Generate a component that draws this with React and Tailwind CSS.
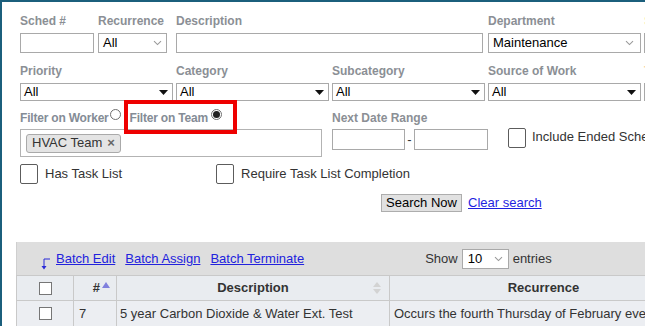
import React from "react";

const Label = ({ children, className = "" }) => (
  <div className={"h-4 text-[12px] leading-4 font-bold text-[#8b8f95] whitespace-nowrap " + className}>{children}</div>
);

const Chevron = () => (
  <svg width="9" height="6" viewBox="0 0 9 6" className="shrink-0">
    <path d="M1 1.2 L4.5 4.6 L8 1.2" fill="none" stroke="#9a9a9a" strokeWidth="1.1" />
  </svg>
);

const Tri = () => (
  <svg width="9" height="5" viewBox="0 0 9 5" className="shrink-0">
    <path d="M0 0 L9 0 L4.5 5 Z" fill="#111" />
  </svg>
);

const SelectTri = ({ value = "All" }) => (
  <div className="h-[18px] border border-[#a9a9a9] bg-white flex items-center pl-[3px] pr-[4px]">
    <span className="flex-1 text-[13px] leading-4 text-black">{value}</span>
    <Tri />
  </div>
);

const Check = ({ cls = "w-[18px] h-[20px]" }) => (
  <div className={cls + " border border-[#5c5c5c] rounded-[2px] bg-white shrink-0"} />
);

const Radio = ({ on }) => (
  <div className="w-[11px] h-[11px] rounded-full border border-[#6f6f6f] bg-white flex items-center justify-center shrink-0 relative top-[-4px]">
    {on && <div className="w-[7px] h-[7px] rounded-full bg-[#222]" />}
  </div>
);

export default function App() {
  return (
    <div className="w-[645px] h-[326px] overflow-hidden bg-white border-l-2 border-t-2 border-[#1b5f7c] font-['Liberation_Sans',Arial,sans-serif] text-[13px] text-[#222]">
      <div className="pl-[18px] pt-[11px] w-[800px]">
        {/* Row 1 */}
        <div className="flex">
          <div className="w-[74px] shrink-0 flex flex-col gap-[4px]">
            <Label>Sched #</Label>
            <div className="h-[20px] border border-[#a9a9a9] bg-white" />
          </div>
          <div className="ml-[4px] w-[69px] shrink-0 flex flex-col gap-[4px]">
            <Label>Recurrence</Label>
            <div className="h-[20px] border border-[#a9a9a9] bg-white flex items-center pl-[4px] pr-[4px]">
              <span className="flex-1 text-[13px] leading-4 text-black">All</span>
              <Chevron />
            </div>
          </div>
          <div className="ml-[9px] w-[307px] shrink-0 flex flex-col gap-[4px]">
            <Label>Description</Label>
            <div className="h-[20px] border border-[#a9a9a9] bg-white" />
          </div>
          <div className="ml-[5px] w-[153px] shrink-0 flex flex-col gap-[4px]">
            <Label>Department</Label>
            <div className="h-[20px] border border-[#a9a9a9] bg-white flex items-center pl-[4px] pr-[6px]">
              <span className="flex-1 text-[13px] leading-4 text-black">Maintenance</span>
              <Chevron />
            </div>
          </div>
          <div className="ml-[3px] w-[100px] shrink-0 flex flex-col gap-[4px]">
            <Label className="text-[#f3e6a8]">Status</Label>
            <div className="h-[20px] border border-[#a9a9a9] bg-white" />
          </div>
        </div>

        {/* Row 2 */}
        <div className="flex mt-[10px]">
          {[
            ["Priority", "w-[153px]"],
            ["Category", "ml-[3px] w-[153px]"],
            ["Subcategory", "ml-[3px] w-[153px]"],
            ["Source of Work", "ml-[3px] w-[153px]"],
          ].map(([l, c]) => (
            <div key={l} className={c + " shrink-0 flex flex-col gap-[4px]"}>
              <Label>{l}</Label>
              <SelectTri />
            </div>
          ))}
          <div className="ml-[3px] w-[100px] shrink-0 flex flex-col gap-[4px]">
            <Label className="text-[#f7d3a8]">Type</Label>
            <SelectTri />
          </div>
        </div>

        {/* Row 3 */}
        <div className="flex mt-[9px]">
          <div className="w-[302px] shrink-0 flex flex-col">
            <div className="relative flex items-center h-4">
              <span className="text-[12px] leading-4 font-bold text-[#848c96] whitespace-nowrap tracking-[-0.2px]">Filter on Worker</span>
              <div className="ml-[1px]"><Radio /></div>
              <span className="ml-[9px] text-[12px] leading-4 font-bold text-[#848c96] whitespace-nowrap tracking-[-0.2px]">Filter on Team</span>
              <div className="ml-[3px]"><Radio on /></div>
              <div className="absolute left-[104px] top-[-10px] w-[113px] h-[34px] border-[4px] border-[#ee0000]" />
            </div>
            <div className="mt-[3px] h-[28px] border border-[#b3b3b3] bg-white flex items-center pl-[5px]">
              <div className="h-[19px] w-[95px] rounded-[3px] border border-[#aaaaaa] bg-[#e4e4e4] flex items-center pl-[5px] gap-[5px]">
                <span className="text-[13px] leading-4 text-[#333]">HVAC Team</span>
                <span className="text-[13px] leading-4 font-bold text-[#666]">×</span>
              </div>
            </div>
          </div>
          <div className="ml-[10px] shrink-0 flex flex-col">
            <Label>Next Date Range</Label>
            <div className="mt-[3px] flex items-start">
              <div className="w-[73px] h-[21px] border border-[#a9a9a9] bg-white shrink-0" />
              <span className="w-[9px] text-center text-[13px] leading-[21px] text-[#333]">-</span>
              <div className="w-[74px] h-[21px] border border-[#a9a9a9] bg-white shrink-0" />
              <div className="ml-[20px] mt-[-1px]"><Check /></div>
              <span className="ml-[6px] text-[13px] leading-[16px] text-[#333] whitespace-nowrap">Include Ended Schedules</span>
            </div>
          </div>
        </div>

        {/* Row 4 */}
        <div className="flex items-center mt-[7px]">
          <Check />
          <span className="ml-[7px] text-[13px] leading-4 text-[#333]">Has Task List</span>
          <div className="ml-[94px]"><Check /></div>
          <span className="ml-[7px] text-[13px] leading-4 text-[#333]">Require Task List Completion</span>
        </div>

        {/* Buttons */}
        <div className="flex items-center mt-[10px] ml-[361px]">
          <div className="w-[81px] h-[18px] bg-[#e1e1e1] border border-[#adadad] flex items-center justify-center text-[13px] text-black leading-4">Search Now</div>
          <span className="ml-[6px] text-[13px] leading-4 text-[#1f1fe0] underline">Clear search</span>
        </div>
      </div>

      {/* Table */}
      <div className="mt-[30px] ml-[14px] w-[800px]">
        <div className="h-[33px] bg-[#dedede] border-l border-[#cfcfcf] flex items-center">
          <svg width="10" height="12" viewBox="0 0 10 12" className="ml-[24px] mt-[10px] shrink-0">
            <path d="M9 1 L3 1 L3 9" fill="none" stroke="#2b2bd8" strokeWidth="1" />
            <path d="M0.5 8 L5.5 8 L3 11.5 Z" fill="#2b2bd8" />
          </svg>
          <span className="ml-[5px] text-[13px] leading-4 text-[#2222dd] underline">Batch Edit</span>
          <span className="ml-[10px] text-[13px] leading-4 text-[#2222dd] underline">Batch Assign</span>
          <span className="ml-[10px] text-[13px] leading-4 text-[#2222dd] underline">Batch Terminate</span>
          <span className="ml-[121px] text-[13px] leading-4 text-[#333]">Show</span>
          <div className="ml-[4px] w-[47px] h-[20px] border border-[#a9a9a9] bg-white flex items-center pl-[5px] pr-[5px]">
            <span className="flex-1 text-[13px] leading-4 text-black">10</span>
            <Chevron />
          </div>
          <span className="ml-[4px] text-[13px] leading-4 text-[#333]">entries</span>
        </div>
        <div className="h-[25px] bg-[#e9ecf0] border-t border-l border-[#c9c9c9] flex">
          <div className="w-[57px] shrink-0 border-r border-[#c9c9c9] flex items-center justify-center">
            <div className="w-[13px] h-[13px] border border-[#767676] bg-white" />
          </div>
          <div className="w-[43px] shrink-0 border-r border-[#c9c9c9] flex items-center justify-end pr-[6px] relative">
            <span className="text-[13px] font-bold text-[#333] leading-4">#</span>
            <svg width="8" height="6" viewBox="0 0 8 6" className="ml-[2px] mb-[7px]">
              <path d="M0 6 L4 0 L8 6 Z" fill="#8080dd" />
            </svg>
          </div>
          <div className="w-[273px] shrink-0 border-r border-[#c9c9c9] flex items-center justify-center relative">
            <span className="text-[13px] font-bold text-[#333] leading-4">Description</span>
            <svg width="8" height="14" viewBox="0 0 8 14" className="absolute right-[8px] top-[5px]">
              <path d="M0 6 L4 1 L8 6 Z" fill="#d3d3d3" />
              <path d="M0 8 L8 8 L4 13 Z" fill="#d3d3d3" />
            </svg>
          </div>
          <div className="w-[308px] shrink-0 border-r border-[#c9c9c9] flex items-center justify-center">
            <span className="text-[13px] font-bold text-[#333] leading-4">Recurrence</span>
          </div>
        </div>
        <div className="h-[26px] bg-[#eceef2] border-t border-l border-[#c9c9c9] flex">
          <div className="w-[57px] shrink-0 border-r border-[#c9c9c9] flex items-center justify-center">
            <div className="w-[13px] h-[13px] border border-[#767676] bg-white" />
          </div>
          <div className="w-[43px] shrink-0 border-r border-[#c9c9c9] flex items-center pl-[5px]">
            <span className="text-[13px] text-[#333] leading-4">7</span>
          </div>
          <div className="w-[273px] shrink-0 border-r border-[#c9c9c9] flex items-center pl-[3px]">
            <span className="text-[13px] text-[#333] leading-4 whitespace-nowrap">5 year Carbon Dioxide &amp; Water Ext. Test</span>
          </div>
          <div className="w-[308px] shrink-0 flex items-center pl-[4px]">
            <span className="text-[13px] text-[#333] leading-4 whitespace-nowrap">Occurs the fourth Thursday of February every year</span>
          </div>
        </div>
      </div>
    </div>
  );
}
